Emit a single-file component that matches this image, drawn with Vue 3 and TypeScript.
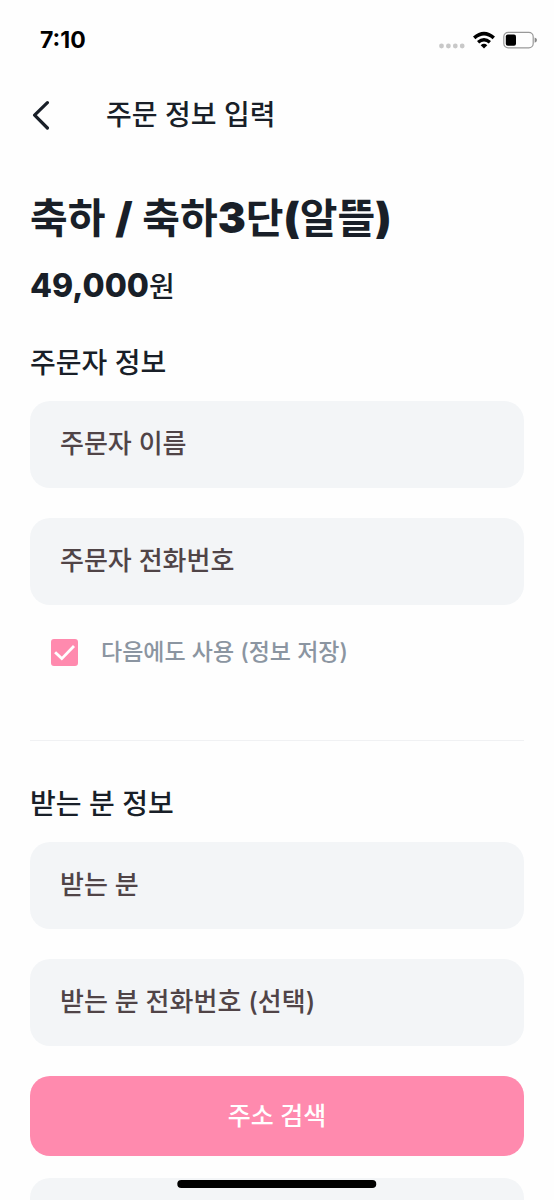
<script setup lang="ts">
import { computed, reactive, ref } from 'vue'

interface Field {
  id: string
  label: string
  type: string
}

interface NamePart {
  text: string
  latin: boolean
}

const product = { name: '축하 / 축하3단(알뜰)', price: 49000 }

// Digits and punctuation in the product name carry a heavier weight than the Hangul.
const nameParts = computed<NamePart[]>(() =>
  product.name
    .split(/([0-9()/]+)/)
    .filter((text) => text !== '')
    .map((text) => ({ text, latin: /^[0-9()/]/.test(text) })),
)

const ordererFields: Field[] = [
  { id: 'orderer-name', label: '주문자 이름', type: 'text' },
  { id: 'orderer-phone', label: '주문자 전화번호', type: 'tel' },
]
const recipientFields: Field[] = [
  { id: 'recipient-name', label: '받는 분', type: 'text' },
  { id: 'recipient-phone', label: '받는 분 전화번호 (선택)', type: 'tel' },
]

const form = reactive<Record<string, string>>({})
const address = ref('')
const saveInfo = ref(true)
</script>

<template>
  <div class="screen">
    <div class="status">
      <span class="time">7:10</span>
      <div class="indicators">
        <svg class="dots" width="26" height="18" viewBox="0 0 26 18" fill="#c8c8c8" aria-hidden="true">
          <circle cx="2.5" cy="15" r="2.4" />
          <circle cx="9.4" cy="15" r="2.4" />
          <circle cx="16.3" cy="15" r="2.4" />
          <circle cx="23.2" cy="15" r="2.4" />
        </svg>
        <svg class="wifi" width="22" height="18" viewBox="0 0 22 18" aria-hidden="true">
          <path d="M1.2 6.9 Q11 -1.6 20.8 6.9" fill="none" stroke="#000" stroke-width="3.6" />
          <path d="M5.1 11.2 Q11 6.2 16.9 11.2" fill="none" stroke="#000" stroke-width="3.4" />
          <path d="M11 17.6 L7.7 14.3 Q11 11.4 14.3 14.3 Z" fill="#000" />
        </svg>
        <svg width="34" height="18" viewBox="0 0 34 18" aria-hidden="true">
          <rect x="0.8" y="1.3" width="29.4" height="15.6" rx="4.4" fill="none" stroke="#999" stroke-width="1.2" />
          <rect x="2.8" y="3.4" width="10.2" height="11.4" rx="2" fill="#000" />
          <path d="M31.6 6.4 Q34 7 34 9.1 Q34 11.2 31.6 11.8 Z" fill="#888" />
        </svg>
      </div>
    </div>

    <header class="bar">
      <button class="back" type="button" aria-label="뒤로">
        <svg width="20" height="30" viewBox="0 0 20 30" aria-hidden="true">
          <path d="M17.4 2.7 L4.6 15.2 L17.4 28" fill="none" stroke="#191f28" stroke-width="3.2" stroke-linecap="round" stroke-linejoin="round" />
        </svg>
      </button>
      <h1 class="bar-title">주문 정보 입력</h1>
    </header>

    <main class="content">
      <h2 class="product"><span v-for="(part, i) in nameParts" :key="i" :class="{ latin: part.latin }">{{ part.text }}</span></h2>
      <p class="price">{{ product.price.toLocaleString('en-US') }}<span class="won">원</span></p>

      <section class="section">
        <h3 class="heading">주문자 정보</h3>
        <div class="fields">
          <input
            v-for="field in ordererFields"
            :id="field.id"
            :key="field.id"
            v-model="form[field.id]"
            class="field"
            :type="field.type"
            :placeholder="field.label"
            :aria-label="field.label"
          />
        </div>
        <label class="save" for="save-info">
          <span class="check">
            <input id="save-info" v-model="saveInfo" class="box" type="checkbox" />
            <svg v-if="saveInfo" class="tick" width="27" height="27" viewBox="0 0 27 27" aria-hidden="true">
              <path d="M4.1 13.2 L10.8 19.6 L23 7" fill="none" stroke="#fff" stroke-width="2.8" />
            </svg>
          </span>
          <span>다음에도 사용 (정보 저장)</span>
        </label>
      </section>

      <hr class="divider" />

      <section class="section">
        <h3 class="heading">받는 분 정보</h3>
        <div class="fields">
          <input
            v-for="field in recipientFields"
            :id="field.id"
            :key="field.id"
            v-model="form[field.id]"
            class="field"
            :type="field.type"
            :placeholder="field.label"
            :aria-label="field.label"
          />
        </div>
        <button class="search" type="button">주소 검색</button>
        <input id="address" v-model="address" class="field" type="text" aria-label="주소" />
      </section>
    </main>

    <div class="home"></div>
  </div>
</template>

<style>
body {
  margin: 0;
  background: #fefefe;
}
</style>

<style scoped>
.screen {
  position: relative;
  display: flex;
  flex-direction: column;
  height: 100vh;
  overflow: hidden;
  box-sizing: border-box;
  background: #fefefe;
  color: #191f28;
  font-family: Inter, 'Noto Sans CJK KR', sans-serif;
}
.screen * {
  box-sizing: border-box;
}
.status {
  display: flex;
  flex: none;
  align-items: center;
  justify-content: space-between;
  height: 80px;
  padding: 0 17px 0 40px;
  color: #000;
}
.time {
  font-size: 23px;
  font-weight: 700;
  line-height: 28px;
}
.indicators {
  display: flex;
  align-items: center;
}
.wifi {
  margin: 0 8px;
}
.bar {
  display: flex;
  flex: none;
  align-items: center;
  gap: 56px;
  height: 70px;
  padding: 0 30px;
}
.back {
  display: flex;
  padding: 0;
  border: 0;
  background: none;
}
.bar-title,
.heading {
  margin: 0;
  font-size: 28px;
  font-weight: 500;
  line-height: 40px;
}
.content {
  flex: 1;
  min-height: 0;
  overflow-y: auto;
  padding: 40px 30px 0;
  scrollbar-width: none;
}
.product {
  margin: 0;
  font-size: 41px;
  font-weight: 700;
  line-height: 56px;
}
.latin {
  font-size: 42px;
  font-weight: 900;
}
.price {
  margin: 20px 0 36px;
  font-size: 32px;
  font-weight: 800;
  line-height: 40px;
}
.won {
  font-size: 28px;
  font-weight: 500;
}
.section {
  display: flex;
  flex-direction: column;
}
.fields {
  display: flex;
  flex-direction: column;
  gap: 30px;
  margin-top: 18px;
}
.field {
  flex: none;
  width: 100%;
  height: 87px;
  padding: 0 30px 2px;
  border: 0;
  border-radius: 20px;
  outline: 0;
  background: #f3f5f7;
  color: #191f28;
  font-family: inherit;
  font-size: 26px;
  font-weight: 500;
}
.field::placeholder {
  color: #504447;
  opacity: 1;
}
.save {
  display: flex;
  align-items: center;
  gap: 23px;
  margin-top: 31px;
  padding-left: 21px;
  color: #8b95a1;
  font-size: 23px;
  font-weight: 500;
  line-height: 32px;
}
.check {
  display: grid;
}
.box,
.tick {
  grid-area: 1 / 1;
  width: 27px;
  height: 27px;
  margin: 0;
}
.box {
  border: 2px solid #ff8aae;
  border-radius: 3px;
  appearance: none;
}
.box:checked {
  background: #ff8aae;
}
.tick {
  pointer-events: none;
}
.divider {
  height: 1px;
  margin: 72px 0 43px;
  border: 0;
  background: #f0f1f3;
}
.search {
  height: 80px;
  margin: 30px 0 22px;
  padding: 0 0 4px;
  border: 0;
  border-radius: 20px;
  background: #ff8aae;
  color: #fff;
  font-family: inherit;
  font-size: 25px;
  font-weight: 500;
}
.home {
  position: absolute;
  bottom: 12px;
  left: 50%;
  width: 36%;
  height: 8px;
  border-radius: 4px;
  background: #000;
  transform: translateX(-50%);
}
</style>
